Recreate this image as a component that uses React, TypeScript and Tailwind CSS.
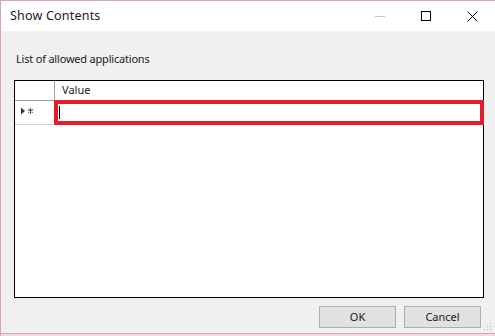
import React from 'react';

const ui = { fontFamily: '"Noto Sans", "Liberation Sans", sans-serif' };

function TitleBar() {
  return (
    <div className="flex flex-row items-center justify-between h-[30px] bg-white">
      <span className="pl-[9px] text-[12.5px] tracking-[0.2px] text-[#1a1a1a]">Show Contents</span>
      <div className="flex flex-row items-center h-full">
        <div className="flex items-center justify-center w-[46px] h-full">
          <div className="w-[10px] h-px bg-[#c8c8c8]" />
        </div>
        <div className="flex items-center justify-center w-[46px] h-full">
          <div className="w-[10px] h-[10px] border border-black" />
        </div>
        <div className="flex items-center justify-center w-[46px] h-full">
          <svg width="11" height="11" viewBox="0 0 11 11">
            <path d="M0.5 0.5 L10.5 10.5 M10.5 0.5 L0.5 10.5" stroke="#000" strokeWidth="1" />
          </svg>
        </div>
      </div>
    </div>
  );
}

function Grid() {
  return (
    <div className="flex flex-col w-[470px] h-[218px] border border-black bg-white">
      <div className="flex flex-row h-[20px] border-b border-[#a0a0a0]">
        <div className="w-[40px] border-r border-[#a0a0a0]" />
        <div className="flex items-center pl-[7px] text-[11px] text-[#1a1a1a]">Value</div>
      </div>
      <div className="flex flex-row h-[24px]">
        <div className="flex items-center w-[40px] pl-[6px] pb-[3px] border-b border-[#d0d0d0]">
          <svg width="14" height="8" viewBox="0 0 14 8">
            <path d="M0 0.5 L4 4 L0 7.5 Z" fill="#333" />
            <path d="M9.5 1 L9.5 7 M7 2.5 L12 5.5 M12 2.5 L7 5.5" stroke="#555" strokeWidth="1.1" />
          </svg>
        </div>
        <div className="flex items-center flex-1 -ml-[1px] -mr-[1px] -mt-[1px] border-[4px] border-[#e31d2b] pl-[1px]">
          <div className="w-px h-[13px] bg-black" />
        </div>
      </div>
    </div>
  );
}

export default function App() {
  return (
    <div className="w-[495px] h-[336px] flex flex-col overflow-hidden border-l border-t border-[#d9a3b5]" style={ui}>
      <TitleBar />
      <div className="flex flex-col flex-1 bg-[#f0f0f0] pl-[13px]">
        <div className="pt-[20px] pl-[2px] text-[11px] tracking-[-0.2px] leading-[16px] text-[#1a1a1a]">List of allowed applications</div>
        <div className="mt-[13px]">
          <Grid />
        </div>
        <div className="flex flex-row justify-end gap-[8px] mt-[8px] pr-[14px]">
          <button className="w-[77px] h-[22px] border border-[#adadad] bg-[#e1e1e1] text-[11px] text-[#1a1a1a]">OK</button>
          <button className="w-[77px] h-[22px] border border-[#adadad] bg-[#e1e1e1] text-[11px] text-[#1a1a1a]">Cancel</button>
        </div>
        <div className="flex flex-row justify-end pr-[3px] mt-[-5px]">
          <svg width="8" height="8" viewBox="0 0 8 8">
            <rect x="6" y="0" width="1" height="1" fill="#b0b0b0" />
            <rect x="3" y="3" width="1" height="1" fill="#b0b0b0" />
            <rect x="6" y="3" width="1" height="1" fill="#b0b0b0" />
            <rect x="0" y="6" width="1" height="1" fill="#b0b0b0" />
            <rect x="3" y="6" width="1" height="1" fill="#b0b0b0" />
            <rect x="6" y="6" width="1" height="1" fill="#b0b0b0" />
          </svg>
        </div>
      </div>
      <div className="h-[3px] bg-[#f3d9e2] border-t border-[#d9a3b5]" />
    </div>
  );
}
